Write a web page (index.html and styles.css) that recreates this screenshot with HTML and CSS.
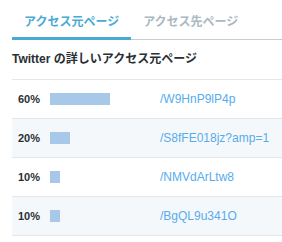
FILE: index.html
```html
<!DOCTYPE html>
<html lang="ja">
<head>
    <meta charset="UTF-8">
    <title>アクセス元ページ</title>
    <link rel="stylesheet" href="styles.css">
</head>
<body>

    <div class="panel">
        <div class="tabs">
            <div class="tab active">アクセス元ページ</div>
            <div class="tab">アクセス先ページ</div>
        </div>

        <h2 class="heading">Twitter の詳しいアクセス元ページ</h2>

        <div class="rows">
            <div class="row">
                <span class="pct">60%</span>
                <span class="bar-area"><span class="bar" style="width: 60px"></span></span>
                <a class="link" href="#">/W9HnP9lP4p</a>
            </div>
            <div class="row alt">
                <span class="pct">20%</span>
                <span class="bar-area"><span class="bar" style="width: 20px"></span></span>
                <a class="link" href="#">/S8fFE018jz?amp=1</a>
            </div>
            <div class="row">
                <span class="pct">10%</span>
                <span class="bar-area"><span class="bar" style="width: 10px"></span></span>
                <a class="link" href="#">/NMVdArLtw8</a>
            </div>
            <div class="row alt">
                <span class="pct">10%</span>
                <span class="bar-area"><span class="bar" style="width: 10px"></span></span>
                <a class="link" href="#">/BgQL9u341O</a>
            </div>
        </div>
    </div>

</body>
</html>
```

FILE: styles.css
```css
body {
    margin: 0;
    background: #fff;
    font-family: "Liberation Sans", "Noto Sans CJK JP", sans-serif;
    color: #292f33;
}

.panel {
    padding-left: 12px;
}

/* Tabs */
.tabs {
    display: flex;
    border-bottom: 1px solid #c3ced6;
}

.tab {
    padding: 14px 12px 7px;
    font-size: 12px;
    line-height: 16px;
    font-weight: bold;
    color: #aab8c2;
    border-bottom: 3px solid transparent;
    margin-bottom: -1px;
}

.tab.active {
    color: #4aaad6;
    border-bottom-color: #4aaad6;
}

.heading {
    margin: 11px 0 12px;
    font-size: 12px;
    line-height: 16px;
    font-weight: bold;
}

/* Rows */
.rows {
    border-top: 1px solid #e1e8ed;
}

.row {
    display: flex;
    align-items: center;
    height: 38px;
    border-bottom: 1px solid #e1e8ed;
}

.row.alt {
    background: #f5f8fa;
}

.pct {
    width: 38px;
    flex-shrink: 0;
    padding-left: 6px;
    box-sizing: border-box;
    font-size: 11px;
    font-weight: bold;
}

.bar-area {
    width: 110px;
    flex-shrink: 0;
    display: flex;
}

.bar {
    height: 12px;
    background: #a7c8e8;
}

.link {
    font-size: 12px;
    color: #55acee;
    text-decoration: none;
    white-space: nowrap;
}
```
